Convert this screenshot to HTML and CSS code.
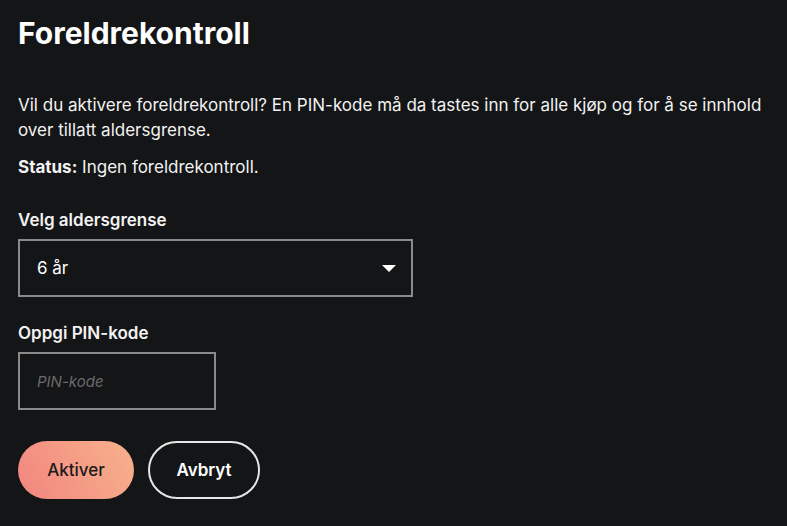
FILE: index.html
```html
<!DOCTYPE html>
<html lang="no">
<head>
  <meta charset="UTF-8">
  <title>Foreldrekontroll</title>
  <meta name="viewport" content="width=device-width, initial-scale=1.0">
  <link rel="stylesheet" href="styles.css">
</head>
<body>
  <h1 class="title">Foreldrekontroll</h1>

  <p class="intro">Vil du aktivere foreldrekontroll? En PIN-kode må da tastes inn for alle kjøp og for å se innhold over tillatt aldersgrense.</p>
  <p class="status"><b>Status:</b> Ingen foreldrekontroll.</p>

  <label class="field-label" for="age">Velg aldersgrense</label>
  <div class="select-wrap">
    <select id="age" class="select">
      <option>6 år</option>
      <option>9 år</option>
      <option>12 år</option>
      <option>15 år</option>
      <option>18 år</option>
    </select>
    <svg class="arrow" width="14" height="7" viewBox="0 0 14 7"><path d="M0 0h14L7 7z" fill="#fff"/></svg>
  </div>

  <label class="field-label field-label-pin" for="pin">Oppgi PIN-kode</label>
  <input id="pin" class="pin" type="password" placeholder="PIN-kode">

  <div class="actions">
    <button class="btn btn-primary">Aktiver</button>
    <button class="btn btn-outline">Avbryt</button>
  </div>
</body>
</html>
```

FILE: styles.css
```css
body { margin: 0; padding: 11px 18px; background: #141517; color: #f2f2f2; font-family: Inter, "Noto Sans", sans-serif; font-size: 17px; }
.title { font-size: 30px; font-weight: 700; margin: 0 0 38px; line-height: 44px; color: #fff; }
.intro { margin: 0; line-height: 25px; }
.status { margin: 12px 0 0; line-height: 25px; }
.status b { font-weight: 700; }
.field-label { display: block; font-weight: 600; margin-top: 30px; line-height: 20px; }
.field-label-pin { margin-top: 26px; }
.select-wrap { position: relative; width: 395px; margin-top: 9px; }
.select { appearance: none; display: block; width: 100%; height: 58px; box-sizing: border-box; background: transparent; color: #fff; border: 2px solid #8a8a8a; border-radius: 0; padding: 0 17px; font: inherit; }
.arrow { position: absolute; right: 17px; top: 26px; pointer-events: none; }
.pin { display: block; width: 198px; height: 58px; box-sizing: border-box; margin-top: 9px; background: transparent; border: 2px solid #8a8a8a; padding: 0 17px; color: #fff; font: inherit; font-size: 15px; }
.pin::placeholder { color: #6a6a6a; font-style: italic; }
.actions { display: flex; gap: 14px; margin-top: 31px; }
.btn { height: 58px; border-radius: 29px; font: inherit; padding: 0; cursor: pointer; }
.btn-primary { width: 116px; border: none; color: #1a1a1a; font-weight: 500; background: linear-gradient(60deg, #f2857f, #f7b28c); }
.btn-outline { width: 112px; background: transparent; color: #fff; font-weight: 600; border: 2px solid #e6e6e6; }
```
